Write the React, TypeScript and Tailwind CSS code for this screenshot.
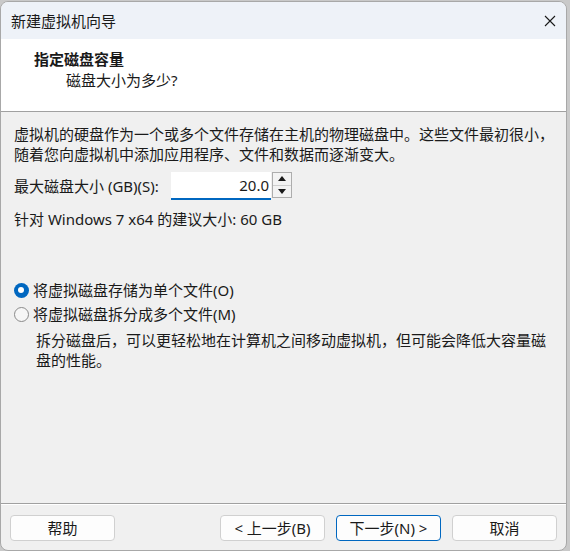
import React from 'react'

const font = 'font-["Segoe_UI","Noto_Sans","Noto_Sans_CJK_SC",sans-serif]'

function WizardButton({ label, primary = false }: { label: string; primary?: boolean }) {
  return (
    <button
      className={`h-[26px] w-[105px] rounded-[4px] border bg-[#fdfdfd] text-[15px] text-[#1a1a1a] leading-none ${
        primary ? 'border-[#0067c0]' : 'border-[#d0d0d0]'
      }`}
    >
      {label}
    </button>
  )
}

function Radio({ checked, label }: { checked: boolean; label: string }) {
  return (
    <div className="flex h-[24px] items-center">
      <div className="flex w-[32px] justify-center pl-[8px]">
        {checked ? (
          <span className="flex h-[15px] w-[15px] items-center justify-center rounded-full bg-[#0067c0]">
            <span className="h-[6px] w-[6px] rounded-full bg-white" />
          </span>
        ) : (
          <span className="h-[15px] w-[15px] rounded-full border border-[#8a8a8a] bg-[#f6f6f6]" />
        )}
      </div>
      <span>{label}</span>
    </div>
  )
}

export default function App() {
  return (
    <div className={`h-[551px] w-[570px] bg-[#c9c9c9] pt-[1px] pr-[3px] ${font}`}>
      <div className="flex h-[550px] flex-col overflow-hidden rounded-[8px] border border-[#a8a8a8] bg-[#f0f0f0] text-[15px] leading-[20px] text-[#1a1a1a]">
        {/* title bar */}
        <div className="flex h-[37px] shrink-0 items-center justify-between bg-[#eef2f8] pl-[10px] pr-[10px]">
          <span className="text-[15px]">新建虚拟机向导</span>
          <svg width="12" height="12" viewBox="0 0 12 12">
            <path d="M1 1 L11 11 M11 1 L1 11" stroke="#1a1a1a" strokeWidth="1.1" />
          </svg>
        </div>

        {/* header */}
        <div className="h-[73px] shrink-0 border-b border-[#a0a0a0] bg-white pt-[10px]">
          <div className="pl-[33px] font-bold">指定磁盘容量</div>
          <div className="mt-[1px] pl-[65px]">磁盘大小为多少?</div>
        </div>

        {/* body */}
        <div className="flex-1 px-[13px] pt-[12px]">
          <p className="whitespace-nowrap">
            虚拟机的硬盘作为一个或多个文件存储在主机的物理磁盘中。这些文件最初很小，
            <br />
            随着您向虚拟机中添加应用程序、文件和数据而逐渐变大。
          </p>

          <div className="mt-[8px] flex items-center">
            <span className="w-[157px]">最大磁盘大小 (GB)(S):</span>
            <div className="flex h-[28px] w-[100px] items-center justify-end border-b-2 border-[#0067c0] bg-white pr-[2px]">
              20.0
            </div>
            <div className="ml-[1px] flex h-[26px] w-[20px] flex-col self-start border border-[#adadad] bg-[#f3f3f3]">
              <div className="flex flex-1 items-center justify-center border-b border-[#cfcfcf]">
                <svg width="8" height="5" viewBox="0 0 8 5">
                  <path d="M0 5 L4 0 L8 5 Z" fill="#1a1a1a" />
                </svg>
              </div>
              <div className="flex flex-1 items-center justify-center">
                <svg width="8" height="5" viewBox="0 0 8 5">
                  <path d="M0 0 L4 5 L8 0 Z" fill="#1a1a1a" />
                </svg>
              </div>
            </div>
          </div>

          <div className="mt-[9px]">针对 Windows 7 x64 的建议大小: 60 GB</div>

          <div className="mt-[49px] -ml-[13px]">
            <Radio checked label="将虚拟磁盘存储为单个文件(O)" />
            <Radio checked={false} label="将虚拟磁盘拆分成多个文件(M)" />
            <p className="mt-[4px] whitespace-nowrap pl-[35px]">
              拆分磁盘后，可以更轻松地在计算机之间移动虚拟机，但可能会降低大容量磁
              <br />
              盘的性能。
            </p>
          </div>
        </div>

        {/* footer */}
        <div className="h-[47px] shrink-0 border-t border-[#a0a0a0]">
          <div className="flex items-center justify-between border-t border-white pt-[10px] pl-[9px] pr-[9px]">
            <WizardButton label="帮助" />
            <div className="flex gap-[11px]">
              <WizardButton label="< 上一步(B)" />
              <WizardButton label="下一步(N) >" primary />
              <WizardButton label="取消" />
            </div>
          </div>
        </div>
      </div>
    </div>
  )
}
